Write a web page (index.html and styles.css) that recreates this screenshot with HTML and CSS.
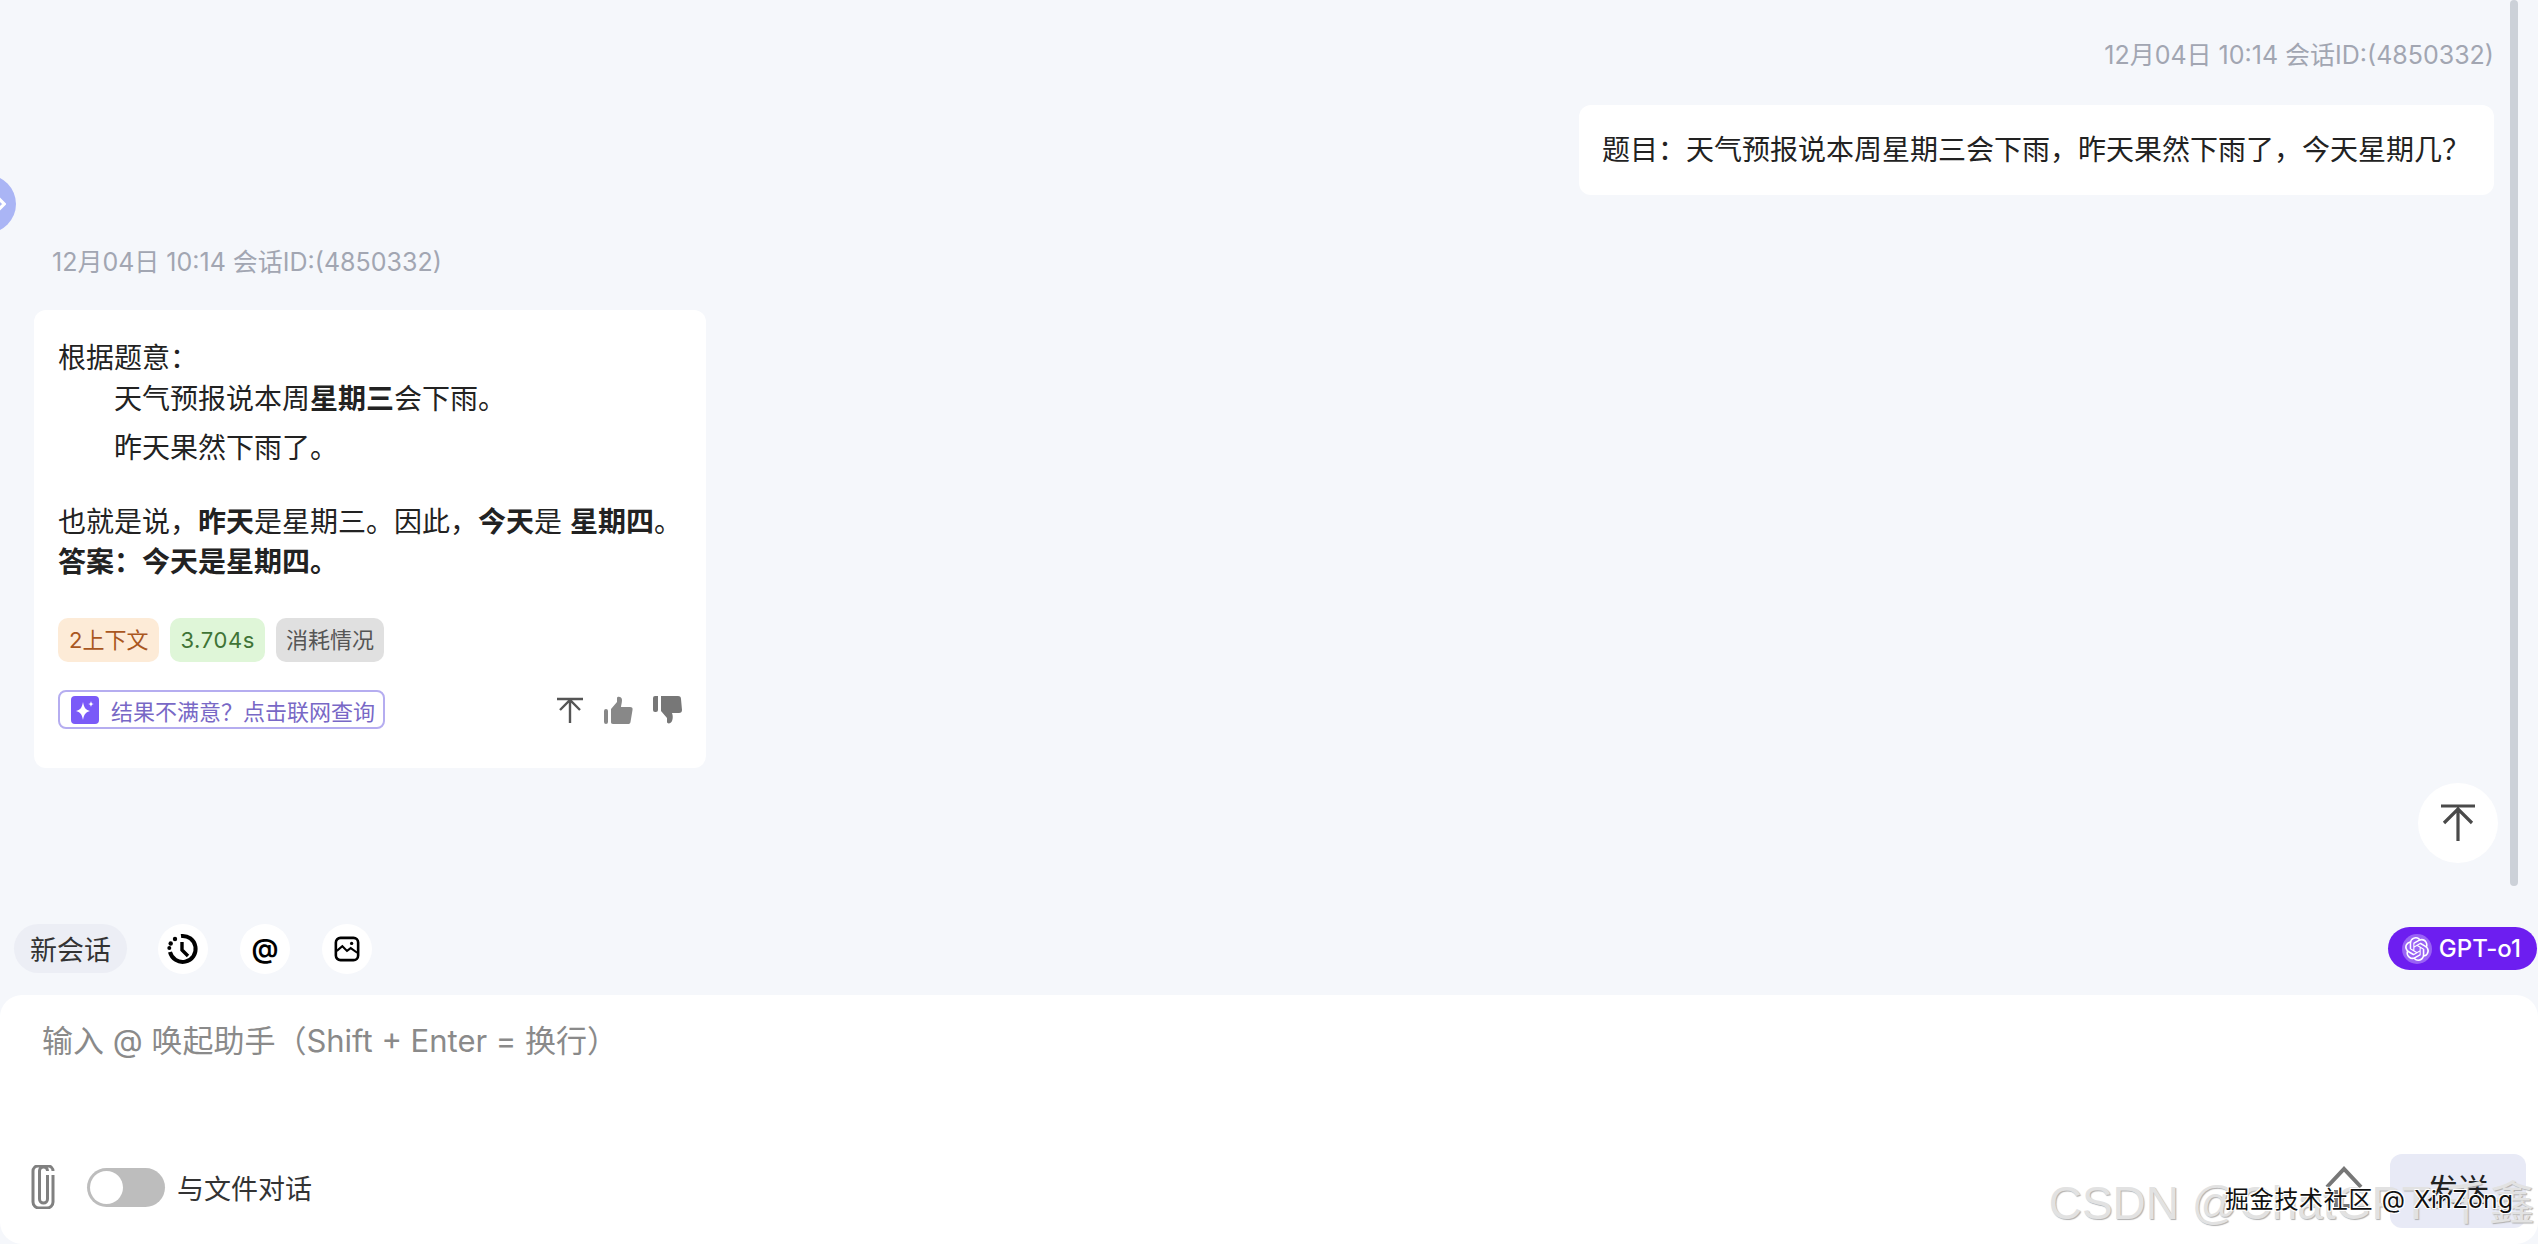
FILE: index.html
```html
<!DOCTYPE html>
<html lang="zh-CN">
<head>
    <meta charset="UTF-8">
    <title>GPT-o1</title>
    <link rel="stylesheet" href="styles.css">
</head>
<body>
    <div class="page">
        <div class="sidebar-toggle">
            <svg viewBox="0 0 10 20" width="9" height="20"><path d="M1 3l7 7-7 7" fill="none" stroke="#fff" stroke-width="3.500"/></svg>
        </div>

        <main class="chat">
            <div class="message message-user">
                <div class="meta">12月04日 10:14 会话ID:(4850332)</div>
                <div class="bubble bubble-user">题目：天气预报说本周星期三会下雨，昨天果然下雨了，今天星期几？</div>
            </div>

            <div class="message message-bot">
                <div class="meta">12月04日 10:14 会话ID:(4850332)</div>
                <div class="bubble bubble-bot">
                    <p class="line">根据题意：</p>
                    <p class="line indent">天气预报说本周<b>星期三</b>会下雨。</p>
                    <p class="line indent second">昨天果然下雨了。</p>
                    <p class="line para">也就是说，<b>昨天</b>是星期三。因此，<b>今天</b>是 <b>星期四</b>。</p>
                    <p class="line"><b>答案：今天是星期四。</b></p>

                    <div class="tags">
                        <span class="tag tag-orange">2上下文</span>
                        <span class="tag tag-green">3.704s</span>
                        <span class="tag tag-grey">消耗情况</span>
                    </div>

                    <div class="actions">
                        <a class="search-link">
                            <span class="spark">
                                <svg viewBox="0 0 28 28" width="28" height="28">
                                    <path d="M12 6c1 6 3 8 7 9-4 1-6 3-7 9-1-6-3-8-7-9 4-1 6-3 7-9z" fill="#fff"/>
                                    <path d="M20 5c.4 2 1 2.700 3 3-2 .4-2.600 1-3 3-.4-2-1-2.600-3-3 2-.3 2.600-1 3-3z" fill="#fff"/>
                                </svg>
                            </span>
                            结果不满意？点击联网查询
                        </a>
                        <div class="action-icons">
                            <svg viewBox="0 0 28 28" width="28" height="28"><path d="M1 3h26M14 27V4M4 14L14 4l10 10" fill="none" stroke="#555" stroke-width="2.400"/></svg>
                            <svg viewBox="0 0 30 28" width="30" height="28"><path d="M1 15a2 2 0 0 1 4 0v11a2 2 0 0 1-4 0zM8 13l6-7V2c0-2 5-2 5 2 0 3-1 5-1 7h9c2 0 3 1 2.500 3l-2 12c-.3 1.500-1 2-2.500 2H10c-1.500 0-2-1-2-2z" fill="#888"/></svg>
                            <svg viewBox="0 0 30 28" width="30" height="28"><path d="M1 2a2 2 0 0 1 2-2h3v14a2 2 0 0 1-2 2H3a2 2 0 0 1-2-2zM9 0h17c2 0 3 1 3 3l1 11c0 2-1 3-3 3h-7c1 3 1 5 0 8-1 3-5 3-5 1v-4l-6-7z" fill="#777"/></svg>
                        </div>
                    </div>
                </div>
            </div>
        </main>

        <div class="scrollbar"></div>
        <button class="to-top">
            <svg viewBox="0 0 36 38" width="36" height="38"><path d="M1 2h34M18 37V4M4 19L18 5l14 14" fill="none" stroke="#4a4a4a" stroke-width="3.200"/></svg>
        </button>

        <div class="toolbar">
            <button class="new-chat">新会话</button>
            <button class="round-btn">
                <svg viewBox="0 0 32 32" width="32" height="32">
                    <path d="M14 3A13 13 0 1 1 3 19" fill="none" stroke="#000" stroke-width="4"/>
                    <circle cx="8" cy="6" r="2.200" fill="#000"/><circle cx="3.700" cy="10.500" r="2.200" fill="#000"/><circle cx="2.300" cy="15" r="2" fill="#000"/>
                    <path d="M15 9v8l6 6" fill="none" stroke="#000" stroke-width="3.400"/>
                </svg>
            </button>
            <button class="round-btn at-btn">@</button>
            <button class="round-btn">
                <svg viewBox="0 0 28 28" width="26" height="26">
                    <rect x="2" y="2" width="24" height="24" rx="5" fill="none" stroke="#000" stroke-width="2.800"/>
                    <path d="M3 16l6-5 5 5 4-3 7 5" fill="none" stroke="#000" stroke-width="2.200"/>
                    <circle cx="19" cy="8" r="1.800" fill="#000"/>
                </svg>
            </button>
            <div class="model-pill">
                <span class="model-logo">
                    <svg viewBox="0 0 24 24" width="26" height="26"><path fill="#fff" d="M22.2819 9.8211a5.9847 5.9847 0 0 0-.5157-4.9108 6.0462 6.0462 0 0 0-6.5098-2.9A6.0651 6.0651 0 0 0 4.9807 4.1818a5.9847 5.9847 0 0 0-3.9977 2.9 6.0462 6.0462 0 0 0 .7427 7.0966 5.98 5.98 0 0 0 .511 4.9107 6.051 6.051 0 0 0 6.5146 2.9001A5.9847 5.9847 0 0 0 13.2599 24a6.0557 6.0557 0 0 0 5.7718-4.2058 5.9894 5.9894 0 0 0 3.9977-2.9001 6.0557 6.0557 0 0 0-.7475-7.0729zm-9.022 12.6081a4.4755 4.4755 0 0 1-2.8764-1.0408l.1419-.0804 4.7783-2.7582a.7948.7948 0 0 0 .3927-.6813v-6.7369l2.02 1.1686a.071.071 0 0 1 .038.052v5.5826a4.504 4.504 0 0 1-4.4945 4.4944zm-9.6607-4.1254a4.4708 4.4708 0 0 1-.5346-3.0137l.142.0852 4.783 2.7582a.7712.7712 0 0 0 .7806 0l5.8428-3.3685v2.3324a.0804.0804 0 0 1-.0332.0615L9.74 19.9502a4.4992 4.4992 0 0 1-6.1408-1.6464zM2.3408 7.8956a4.485 4.485 0 0 1 2.3655-1.9728V11.6a.7664.7664 0 0 0 .3879.6765l5.8144 3.3543-2.0201 1.1685a.0757.0757 0 0 1-.071 0l-4.8303-2.7865A4.504 4.504 0 0 1 2.3408 7.872zm16.5963 3.8558L13.1038 8.364 15.1192 7.2a.0757.0757 0 0 1 .071 0l4.8303 2.7913a4.4944 4.4944 0 0 1-.6765 8.1042v-5.6772a.79.79 0 0 0-.407-.667zm2.0107-3.0231l-.142-.0852-4.7735-2.7818a.7759.7759 0 0 0-.7854 0L9.409 9.2297V6.8974a.0662.0662 0 0 1 .0284-.0615l4.8303-2.7866a4.4992 4.4992 0 0 1 6.6802 4.66zM8.3065 12.863l-2.02-1.1638a.0804.0804 0 0 1-.038-.0567V6.0742a4.4992 4.4992 0 0 1 7.3757-3.4537l-.142.0805L8.704 5.459a.7948.7948 0 0 0-.3927.6813zm1.0976-2.3654l2.602-1.4998 2.6069 1.4998v2.9994l-2.5974 1.4997-2.6067-1.4997Z"/></svg>
                </span>
                GPT-o1
            </div>
        </div>

        <div class="composer">
            <div class="placeholder">输入 @ 唤起助手（Shift + Enter = 换行）</div>
            <div class="composer-bottom">
                <svg class="clip" viewBox="0 0 24 44" width="24" height="44"><path d="M16.500 10v24a4 4 0 0 1-8 0V6a4 4 0 0 1 8 0M22 10v27a6 6 0 0 1-6 6H8a6 6 0 0 1-6-6V6a5 5 0 0 1 5-5h10a5 5 0 0 1 5 5" fill="none" stroke="#808080" stroke-width="3"/></svg>
                <div class="switch"><span class="knob"></span></div>
                <span class="switch-label">与文件对话</span>
                <svg class="send-arrow" viewBox="0 0 38 42" width="38" height="42"><path d="M2 21L19 3l17 18M11 24v16h16V24" fill="none" stroke="#777" stroke-width="4"/></svg>
                <button class="send">发送</button>
            </div>
        </div>

        <div class="watermark">CSDN @ChatGPT-千鑫</div>
        <div class="stamp">掘金技术社区 @ XinZong</div>
    </div>
</body>
</html>
```

FILE: styles.css
```css
html, body {
    margin: 0;
    padding: 0;
}

body {
    font-family: Inter, "Noto Sans CJK SC", sans-serif;
    background-color: #f5f7fb;
    color: #222;
    font-size: 28px;
}

button {
    font-family: inherit;
    border: none;
    padding: 0;
    cursor: pointer;
}

.page {
    position: relative;
    height: 1244px;
    display: flex;
    flex-direction: column;
    overflow: hidden;
}

.sidebar-toggle {
    position: absolute;
    left: -42px;
    top: 175px;
    width: 58px;
    height: 58px;
    border-radius: 50%;
    background-color: #aab5f5;
    display: flex;
    align-items: center;
    justify-content: flex-end;
    padding-right: 10px;
    box-sizing: border-box;
}

/* Messages */
.chat {
    flex: 1;
    padding: 37px 44px 0 34px;
}

.meta {
    font-size: 25px;
    line-height: 36px;
    color: #a2a6b2;
}

.message-user {
    display: flex;
    flex-direction: column;
    align-items: flex-end;
}

.message-bot {
    margin-top: 49px;
}

.message-bot .meta {
    margin-left: 18px;
}

.bubble {
    background-color: #fff;
    border-radius: 12px;
    box-sizing: border-box;
}

.bubble-user {
    margin-top: 32px;
    height: 90px;
    width: 915px;
    padding: 0 23px;
    line-height: 90px;
    white-space: nowrap;
}

.bubble-bot {
    margin-top: 30px;
    width: 672px;
    height: 458px;
    padding: 28px 24px 0;
}

.line {
    margin: 0;
    line-height: 40px;
    white-space: nowrap;
}

.line b {
    font-weight: 700;
}

.indent {
    margin-left: 56px;
    margin-top: 1px;
}

.second {
    margin-top: 9px;
}

.para {
    margin-top: 34px;
}

.tags {
    display: flex;
    gap: 11px;
    margin-top: 36px;
}

.tag {
    font-size: 22px;
    line-height: 44px;
    padding: 0 11px;
    border-radius: 10px;
}

.tag-orange {
    background-color: #fdebd7;
    color: #a9571f;
}

.tag-green {
    padding: 0 10px;
    background-color: #dff6d8;
    color: #3f7436;
    letter-spacing: 0.6px;
}

.tag-grey {
    padding: 0 10px;
    background-color: #e0e0e0;
    color: #555;
}

.actions {
    display: flex;
    align-items: center;
    justify-content: space-between;
    margin-top: 28px;
}

.search-link {
    display: flex;
    align-items: center;
    gap: 12px;
    box-sizing: border-box;
    width: 327px;
    height: 39px;
    padding-left: 11px;
    border: 2px solid #b5adf0;
    border-radius: 8px;
    font-size: 22px;
    color: #7868c6;
    white-space: nowrap;
}

.spark {
    display: flex;
    width: 28px;
    height: 28px;
    border-radius: 4px;
    background-color: #7a5af8;
}

.action-icons {
    display: flex;
    gap: 19px;
    align-items: center;
}

/* Floating bits */
.scrollbar {
    position: absolute;
    right: 20px;
    top: 0;
    width: 8px;
    height: 886px;
    border-radius: 4px;
    background-color: #ccd1d8;
}

.to-top {
    position: absolute;
    left: 2418px;
    top: 783px;
    width: 80px;
    height: 80px;
    border-radius: 50%;
    background-color: #fff;
    display: flex;
    align-items: center;
    justify-content: center;
}

/* Toolbar above input */
.toolbar {
    display: flex;
    align-items: center;
    padding: 0 1px 21px 14px;
    height: 51px;
}

.new-chat {
    width: 113px;
    height: 49px;
    border-radius: 25px;
    background-color: #eceef5;
    font-size: 27px;
    color: #333;
    margin-right: 31px;
}

.round-btn {
    width: 50px;
    height: 50px;
    border-radius: 50%;
    background-color: #fff;
    display: flex;
    align-items: center;
    justify-content: center;
    margin-right: 32px;
    color: #000;
}

.at-btn {
    font-size: 27px;
    font-weight: 600;
}

.model-pill {
    margin-left: auto;
    display: flex;
    align-items: center;
    gap: 7px;
    height: 43px;
    padding: 0 16px 0 14px;
    border-radius: 22px;
    background-color: #6d1ef0;
    color: #fff;
    font-size: 24px;
    font-weight: 500;
}

.model-logo {
    display: flex;
    align-items: center;
    justify-content: center;
    width: 30px;
    height: 30px;
    border-radius: 50%;
    background-color: #9a63f5;
}

.model-logo svg {
    width: 24px;
    height: 24px;
}

/* Input */
.composer {
    height: 249px;
    box-sizing: border-box;
    background-color: #fff;
    border-radius: 22px;
    padding: 24px 12px 16px 31px;
    display: flex;
    flex-direction: column;
    justify-content: space-between;
}

.placeholder {
    font-size: 31px;
    line-height: 44px;
    color: #8a8a8a;
    margin-left: 11px;
}

.composer-bottom {
    display: flex;
    align-items: center;
    height: 74px;
}

.clip {
    margin-bottom: 8px;
}

.switch {
    width: 78px;
    height: 39px;
    margin: 0 0 8px 32px;
    border-radius: 20px;
    background-color: #bdbdbd;
    display: flex;
    align-items: center;
    padding-left: 3px;
    box-sizing: border-box;
}

.knob {
    width: 33px;
    height: 33px;
    border-radius: 50%;
    background-color: #fff;
}

.switch-label {
    margin: 0 0 8px 12px;
    font-size: 27px;
    color: #333;
}

.send-arrow {
    margin: 0 27px 8px auto;
}

.send {
    width: 136px;
    height: 74px;
    padding-bottom: 8px;
    border-radius: 12px;
    background-color: #e8eaf6;
    font-size: 31px;
    color: #222;
}

/* Overlaid watermarks */
.watermark {
    position: absolute;
    right: 3px;
    top: 1176px;
    font-family: "Liberation Sans", "Noto Sans CJK SC", sans-serif;
    font-size: 46px;
    line-height: 54px;
    color: #e2e2e2;
    text-shadow: 1px 1px 1px #b0b0b0;
    white-space: nowrap;
}

.stamp {
    position: absolute;
    left: 2225px;
    top: 1183px;
    font-size: 24px;
    line-height: 34px;
    word-spacing: 1px;
    letter-spacing: 0.7px;
    color: #111;
    text-shadow: 1px 1px 0 #fff, -1px -1px 0 #fff, 1px -1px 0 #fff, -1px 1px 0 #fff;
    white-space: nowrap;
}
```
